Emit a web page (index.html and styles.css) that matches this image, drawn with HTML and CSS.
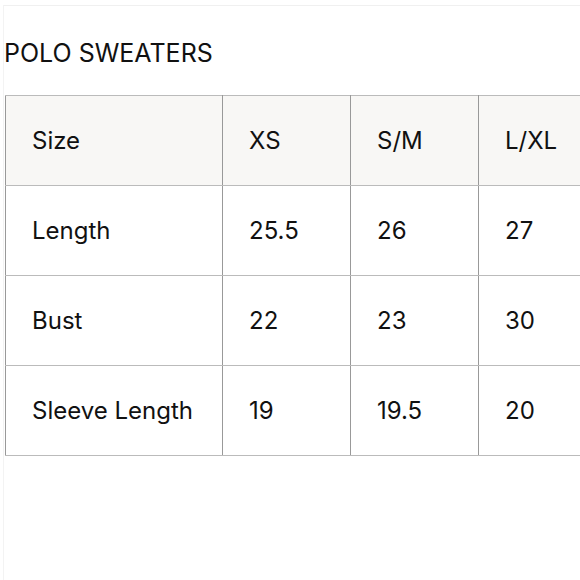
FILE: index.html
```html
<!DOCTYPE html>
<html>
<head>
<meta charset="utf-8">
<link rel="stylesheet" href="styles.css">
</head>
<body>
<div class="frame">
  <h1 class="title">POLO SWEATERS</h1>
  <table class="chart">
    <thead>
      <tr><th>Size</th><th>XS</th><th>S/M</th><th>L/XL</th></tr>
    </thead>
    <tbody>
      <tr><td>Length</td><td>25.5</td><td>26</td><td>27</td></tr>
      <tr><td>Bust</td><td>22</td><td>23</td><td>30</td></tr>
      <tr><td>Sleeve Length</td><td>19</td><td>19.5</td><td>20</td></tr>
    </tbody>
  </table>
</div>
</body>
</html>
```
FILE: styles.css
```css
html, body {
  margin: 0;
  padding: 0;
  background: #fff;
  overflow: hidden;
  width: 580px;
  height: 580px;
}
body {
  font-family: Inter, "Noto Sans", sans-serif;
  color: #111;
}
.frame {
  margin: 5px 0 0 3px;
  border-top: 1px solid #f0f0f0;
  border-left: 1px solid #f3f3f3;
  height: 574px;
  width: 576px;
  overflow: hidden;
}
.title {
  margin: 0;
  padding: 32px 0 0 0;
  height: 57px;
  font-size: 25px;
  font-weight: 400;
  line-height: 30px;
  letter-spacing: 0;
}
.chart {
  border-collapse: collapse;
  table-layout: fixed;
  width: 602px;
  margin-left: 1px;
}
.chart th, .chart td {
  border: 1px solid #bbbbbb;
  border-left-color: #999;
  border-right-color: #999;
  height: 89px;
  padding: 0 0 0 26px;
  text-align: left;
  font-size: 24px;
  font-weight: 400;
  vertical-align: middle;
}
.chart th:first-child, .chart td:first-child { width: 190px; }
.chart th { background: #f8f7f5; height: 89px; }
```
